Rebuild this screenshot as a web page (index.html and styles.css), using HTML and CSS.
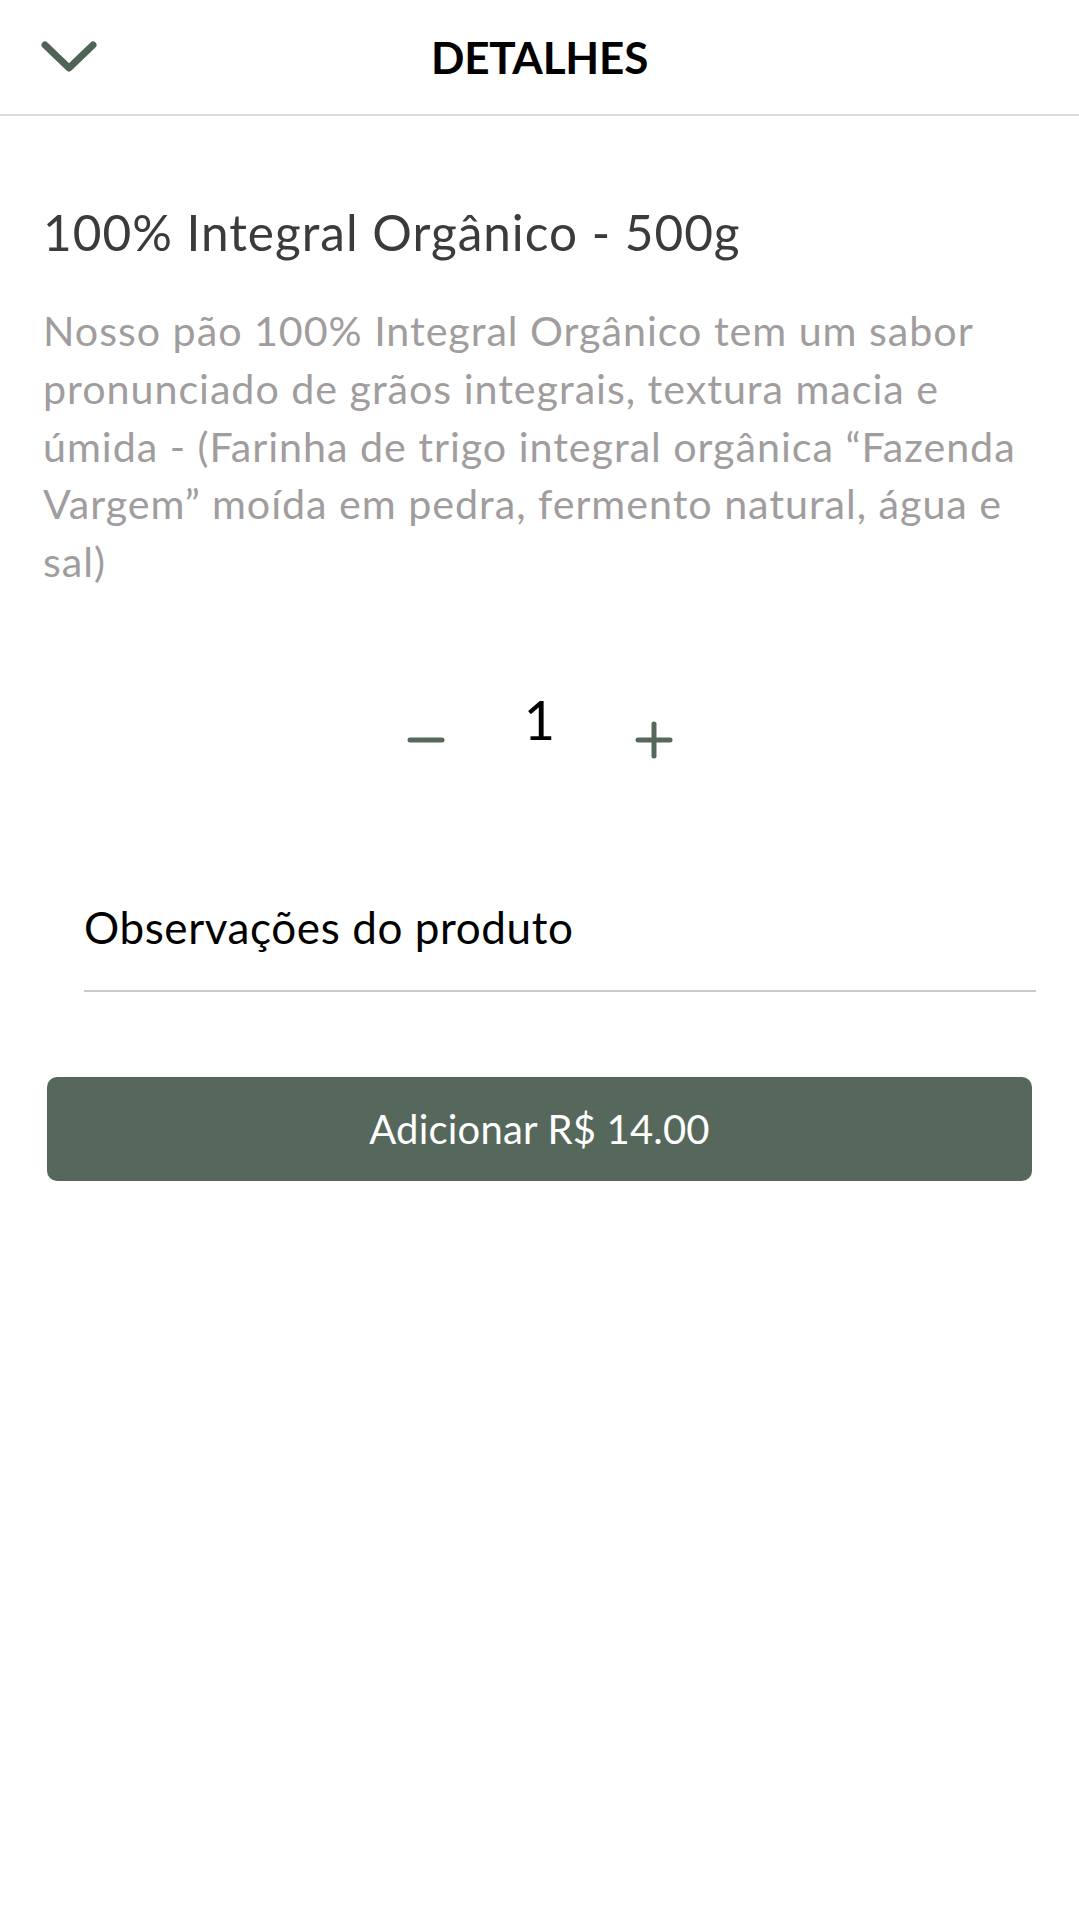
FILE: index.html
```html
<!DOCTYPE html>
<html lang="pt-BR">
<head>
    <meta charset="UTF-8">
    <meta name="viewport" content="width=device-width, initial-scale=1.0">
    <title>Detalhes</title>
    <link rel="stylesheet" href="styles.css">
</head>
<body>
    <header class="topbar">
        <button class="back-btn" aria-label="Fechar">
            <svg width="56" height="32" viewBox="0 0 56 32">
                <polyline points="4,4 28,27 52,4" fill="none" stroke="#4f6356" stroke-width="7" stroke-linecap="round" stroke-linejoin="round"/>
            </svg>
        </button>
        <h1 class="topbar-title">DETALHES</h1>
        <span></span>
    </header>

    <main class="content">
        <h2 class="product-name">100% Integral Orgânico - 500g</h2>
        <p class="product-desc">Nosso pão 100% Integral Orgânico tem um sabor pronunciado de grãos integrais, textura macia e úmida - (Farinha de trigo integral orgânica “Fazenda Vargem” moída em pedra, fermento natural, água e sal)</p>

        <div class="qty">
            <button class="qty-btn" aria-label="Diminuir">
                <svg width="38" height="38" viewBox="0 0 38 38">
                    <line x1="3" y1="19" x2="35" y2="19" stroke="#56685b" stroke-width="5" stroke-linecap="round"/>
                </svg>
            </button>
            <span class="qty-value">1</span>
            <button class="qty-btn" aria-label="Aumentar">
                <svg width="38" height="38" viewBox="0 0 38 38">
                    <line x1="3" y1="19" x2="35" y2="19" stroke="#56685b" stroke-width="5" stroke-linecap="round"/>
                    <line x1="19" y1="3" x2="19" y2="35" stroke="#56685b" stroke-width="5" stroke-linecap="round"/>
                </svg>
            </button>
        </div>

        <div class="notes">
            <input class="notes-input" type="text" placeholder="Observações do produto">
        </div>

        <button class="add-btn">Adicionar R$ 14.00</button>
    </main>
</body>
</html>
```

FILE: styles.css
```css
body {
    margin: 0;
    font-family: Lato, "Open Sans", sans-serif;
    background: #fff;
    color: #000;
}
button {
    font-family: inherit;
    background: none;
    border: 0;
    padding: 0;
    cursor: pointer;
}
.topbar {
    height: 114px;
    display: grid;
    grid-template-columns: 1fr auto 1fr;
    align-items: center;
    border-bottom: 2px solid #dcdcdc;
}
.back-btn {
    justify-self: start;
    margin-left: 41px;
    display: flex;
}
.topbar-title {
    margin: 0;
    font-size: 44px;
    font-weight: 700;
    letter-spacing: -0.2px;
    color: #000;
}
.content {
    padding: 0 43px;
}
.product-name {
    margin: 86px 0 0;
    font-size: 49.5px;
    line-height: 60px;
    font-weight: 400;
    color: #3b3b3b;
    letter-spacing: 1px;
}
.product-desc {
    margin: 40px 0 0;
    font-size: 41.25px;
    line-height: 57.75px;
    color: #a19d9e;
    letter-spacing: 0.95px;
}
.qty {
    margin-top: 94px;
    height: 70px;
    display: flex;
    justify-content: center;
    align-items: flex-start;
    gap: 58px;
}
.qty-btn {
    margin-top: 36px;
    width: 56px;
    height: 38px;
    display: flex;
    justify-content: center;
}
.qty-value {
    min-width: 56px;
    text-align: center;
    font-size: 54px;
    line-height: 70px;
}
.notes {
    margin: 142px 0 0 41px;
    border-bottom: 2px solid #c9c9c9;
    padding-bottom: 33px;
}
.notes-input {
    width: 100%;
    border: 0;
    outline: none;
    padding: 0;
    font-family: inherit;
    font-size: 44px;
    line-height: 60px;
    height: 60px;
    letter-spacing: 0.6px;
    color: #000;
}
.notes-input::placeholder {
    color: #000;
    opacity: 1;
}
.add-btn {
    display: block;
    margin: 85px 4px 0;
    width: calc(100% - 8px);
    height: 104px;
    border-radius: 10px;
    background: #56685b;
    color: #fff;
    font-size: 40px;
    letter-spacing: 0.2px;
}
```
